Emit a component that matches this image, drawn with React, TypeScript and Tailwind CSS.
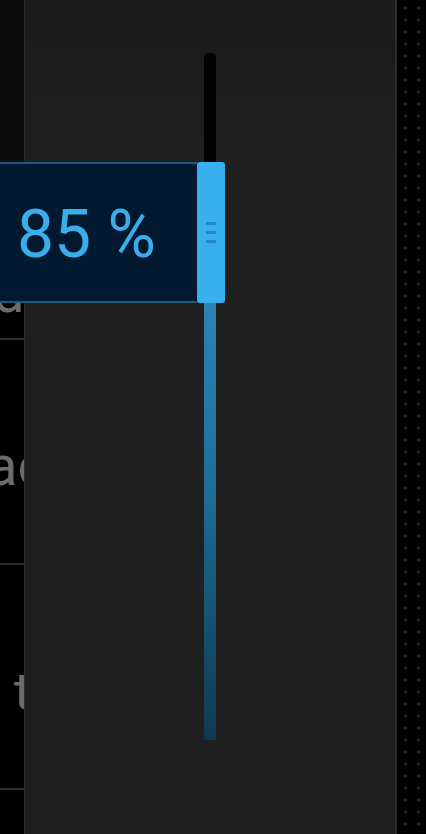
import React from "react";

export default function App() {
  const font = { fontFamily: "Roboto, 'Noto Sans', sans-serif" };
  return (
    <div className="relative w-[426px] h-[834px] overflow-hidden bg-black flex" style={font}>
      {/* left list column */}
      <div className="w-[25px] h-full flex flex-col overflow-hidden border-r border-[#2c2c2c] shrink-0">
        <div className="h-[162px] bg-[#0c0c0c]" />
        <div className="h-[178px] bg-black flex items-end border-b-2 border-[#2e2e2e] overflow-hidden">
          <span className="text-[56px] leading-none text-[#6c6c6c] ml-[-7px] mb-[17px] whitespace-nowrap">d</span>
        </div>
        <div className="h-[225px] bg-black flex items-center border-b-2 border-[#2e2e2e] overflow-hidden">
          <span className="text-[56px] leading-none text-[#6c6c6c] ml-[-13px] mt-[28px] whitespace-nowrap">ac</span>
        </div>
        <div className="h-[225px] bg-black flex items-center border-b-2 border-[#2e2e2e] overflow-hidden">
          <span className="text-[52px] leading-none text-[#6c6c6c] ml-[14px] mt-[30px] whitespace-nowrap">t</span>
        </div>
        <div className="flex-1 bg-black" />
      </div>

      {/* main panel */}
      <div className="relative flex-1 h-full bg-[linear-gradient(180deg,#1a1a1a_0%,#202020_20%,#1f1f1f_100%)] border-r-2 border-[#2b2b2b] flex justify-center">
        <div className="mt-[53px] w-[12px] h-[687px] rounded-t-[4px] rounded-b-[3px] flex flex-col overflow-hidden">
          <div className="h-[109px] bg-[#020202]" />
          <div className="h-[141px] bg-[#2a86b8]" />
          <div className="flex-1 bg-[linear-gradient(180deg,#2a84b6_0%,#1f6f9a_40%,#0e3a52_100%)]" />
        </div>
      </div>

      {/* right dotted strip */}
      <div className="w-[29px] h-full shrink-0 bg-black bg-[radial-gradient(circle,#262626_1.2px,transparent_2px)] bg-[length:13px_12px] bg-[position:2px_2px]" />

      {/* value label + thumb overlay */}
      <div className="absolute left-0 top-[162px] flex h-[141px]">
        <div className="w-[197px] h-full bg-[#03192f] border-y-2 border-[#1d5682] flex items-center">
          <span className="ml-[17px] mt-[4px] text-[66px] font-normal leading-none text-[#3aaeea] whitespace-nowrap">85 %</span>
        </div>
        <div className="w-[28px] h-full bg-[#38b0f0] rounded-[3px] flex flex-col items-center justify-center gap-[6px]">
          <div className="w-[10px] h-[3px] bg-[#2587c6]" />
          <div className="w-[10px] h-[3px] bg-[#2587c6]" />
          <div className="w-[10px] h-[3px] bg-[#2587c6]" />
        </div>
      </div>
    </div>
  );
}
